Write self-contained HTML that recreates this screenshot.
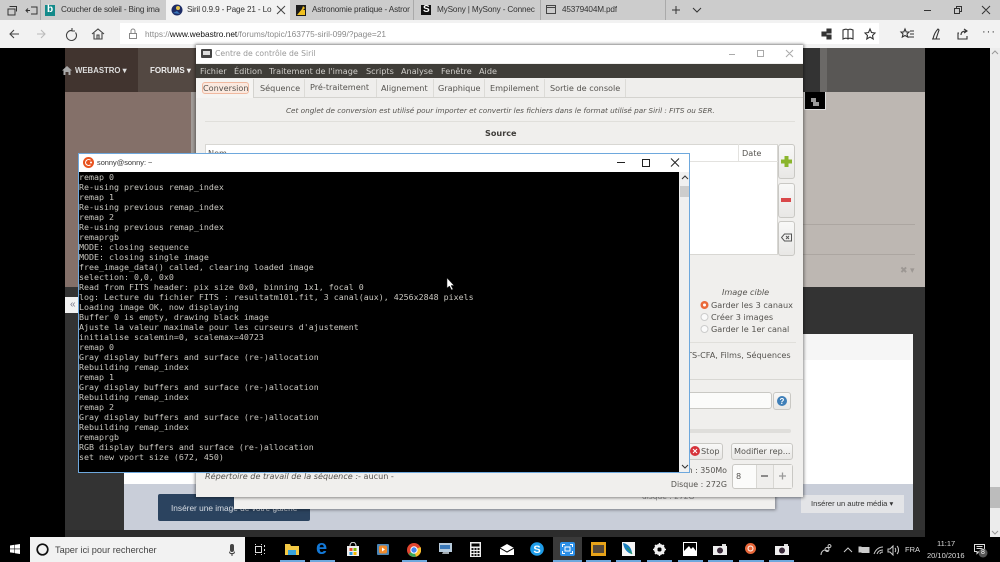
<!DOCTYPE html>
<html><head><meta charset="utf-8"><style>
html,body{margin:0;padding:0;background:#000}
#p{position:relative;width:1000px;height:562px;overflow:hidden;background:#000;font-family:"Liberation Sans",sans-serif;filter:blur(.3px)}
.b,.t,svg{position:absolute}
.t{white-space:nowrap}
.d{font-family:"DejaVu Sans",sans-serif;font-size:8.150px;color:#55534f;line-height:12px}
.tb{font-size:8.200px;letter-spacing:-.15px;color:#333;line-height:12px;overflow:hidden}
.btn{position:absolute;background:linear-gradient(#f8f8f7,#e8e7e5);border:1px solid #c9c8c4;border-radius:3px;box-sizing:border-box}
</style></head><body><div id="p">
<!-- browser chrome -->
<div class="b" style="left:0;top:0;width:1000px;height:20px;background:#ccc"></div>
<div class="b" style="left:0;top:20px;width:1000px;height:28px;background:#f2f2f2"></div>
<div class="b" style="left:166px;top:0;width:124px;height:20px;background:#f2f2f2"></div>
<div class="b" style="left:40px;top:0;width:1px;height:20px;background:#aaa"></div>
<div class="b" style="left:413px;top:0;width:1px;height:20px;background:#aaa"></div>
<div class="b" style="left:540px;top:0;width:1px;height:20px;background:#aaa"></div>
<div class="b" style="left:665px;top:0;width:1px;height:20px;background:#aaa"></div>
<svg style="left:6px;top:4px" width="34" height="13" fill="none" stroke="#333"><path d="M2.500 2.500h7v5M1 5h7v6H1z" transform="translate(1 0)"/><path d="M20 6.500h4M22 4.500l-2 2 2 2M25 3h6v7h-6"/></svg>
<div class="b" style="left:45px;top:5px;width:10px;height:11px;background:#138a8a"></div>
<div class="t" style="left:47px;top:4px;font:bold 10px 'Liberation Sans';color:#fff">b</div>
<div class="t tb" style="left:61px;top:4px;width:99px">Coucher de soleil - Bing images</div>
<svg style="left:171px;top:4px" width="12" height="12"><circle cx="6" cy="6" r="5.500" fill="#1d2c66"/><circle cx="7" cy="4" r="2" fill="#e3c24a"/><path d="M2 9l4-2 3 3" fill="#3b79bd"/></svg>
<div class="t tb" style="left:187px;top:4px;width:85px">Siril 0.9.9 - Page 21 - Lo</div>
<svg style="left:276px;top:5px" width="10" height="10" stroke="#444"><path d="M1 1l8 8M9 1l-8 8"/></svg>
<div class="b" style="left:296px;top:5px;width:10px;height:11px;background:#1b1b1b"></div>
<svg style="left:296px;top:5px" width="10" height="11"><path d="M1 10l5-6 1-3 2 2-2 2h2v5z" fill="#f0c020"/></svg>
<div class="t tb" style="left:312px;top:4px;width:98px">Astronomie pratique - Astronomie</div>
<div class="b" style="left:421px;top:5px;width:10px;height:10px;background:#111"></div>
<div class="t" style="left:423px;top:4px;font:bold 10px 'Liberation Sans';color:#fff">S</div>
<div class="t tb" style="left:437px;top:4px;width:98px">MySony | MySony - Connec</div>
<svg style="left:546px;top:5px" width="10" height="10" fill="none" stroke="#444"><path d="M.5.500h9v8h-9zM.5 2.500h9"/></svg>
<div class="t tb" style="left:562px;top:4px">45379404M.pdf</div>
<svg style="left:671px;top:5px" width="32" height="10" fill="none" stroke="#333"><path d="M5 1v8M1 5h8M22 3l4 4 4-4"/></svg>
<svg style="left:923px;top:5px" width="70" height="10" fill="none" stroke="#333"><path d="M1 5.500h7M31.500 3.500h5v5h-5zM33.500 3.500v-2h5v5h-2M59 1l8 8M67 1l-8 8"/></svg>
<svg style="left:8px;top:26px" width="100" height="16" fill="none" stroke="#444" stroke-width="1.100"><path d="M2 8h9M6 4L2 8l4 4"/><path d="M29 8h8M33 4l4 4-4 4" stroke="#bbb"/><path d="M64 4.500a5 5 0 1 0 3.500 2M64 2v3h3"/><path d="M90 8l6-5 6 5M92 7v6h8V7M95 13V9h2v4" transform="translate(-6 0)"/></svg>
<div class="b" style="left:120px;top:23px;width:759px;height:21px;background:#fff"></div>
<svg style="left:128px;top:28px" width="10" height="11" fill="none" stroke="#888"><path d="M1.500 5.500h7v5h-7zM3 5V3a2 2 0 0 1 4 0v2"/></svg>
<div class="t" style="left:145px;top:28px;font-size:8.300px;line-height:12px;color:#8a8a8a">https://<span style="color:#111">www.webastro.net</span>/forums/topic/163775-siril-099/?page=21</div>
<svg style="left:820px;top:27px" width="180" height="14" fill="none" stroke="#333" stroke-width="1.100"><path d="M2 5h4v4H2zM7 2h4v4H7zM7 8h4v4H7z" fill="#333"/><path d="M23 3c2-1 4-1 5 0 1-1 3-1 5 0v9c-2-1-4-1-5 0-1-1-3-1-5 0zM28 3v9" /><path d="M50 2l1.500 3.500L55 6l-2.500 2.500.7 3.500-3.200-2-3.200 2 .7-3.500L45 6l3.500-.500z"/><path d="M85 2l1.200 3H89l-2 2 .7 3-2.700-1.500L82.300 10l.7-3-2-2h2.800zM90 4h4M90 7h4M88 10h6"/><path d="M113 12c1-5 3-8 5-10l1 1-3 9zM112 12h8"/><path d="M139 6h-1v6h9V9M141 8c0-3 2-4 5-4M144 2l3 2-3 2"/></svg>
<div class="t" style="left:982px;top:26px;font-size:11px;letter-spacing:1px;color:#333">···</div>
<!-- page -->
<div class="b" style="left:65px;top:48px;width:925px;height:482px;background:#333"></div>
<div class="b" style="left:0;top:48px;width:65px;height:489px;background:#000"></div>
<div class="b" style="left:925px;top:48px;width:65px;height:489px;background:#000"></div>
<div class="b" style="left:65px;top:530px;width:860px;height:7px;background:#2c2c2c"></div>
<div class="b" style="left:990px;top:48px;width:10px;height:489px;background:#ececec"></div>
<div class="b" style="left:990px;top:487px;width:10px;height:21px;background:#bcbcbc"></div>
<svg style="left:991px;top:50px" width="8" height="6" fill="none" stroke="#999"><path d="M1 4l3-3 3 3"/></svg>
<svg style="left:991px;top:530px" width="8" height="6" fill="none" stroke="#999"><path d="M1 1l3 3 3-3"/></svg>
<div class="b" style="left:65px;top:48px;width:73px;height:44px;background:#41342f"></div>
<div class="b" style="left:138px;top:48px;width:58px;height:44px;background:#534842"></div>
<div class="b" style="left:820px;top:48px;width:7px;height:44px;background:#6b6967"></div>
<div class="b" style="left:827px;top:48px;width:98px;height:44px;background:#595755"></div>
<div class="b" style="left:65px;top:92px;width:126px;height:195px;background:#847069"></div>
<div class="b" style="left:191px;top:92px;width:5px;height:195px;background:#a39d99"></div>
<div class="b" style="left:803px;top:92px;width:122px;height:195px;background:#bdb7b2"></div>
<div class="b" style="left:803px;top:224px;width:112px;height:1px;background:#aca6a1"></div>
<div class="b" style="left:803px;top:254px;width:112px;height:1px;background:#aca6a1"></div>
<div class="b" style="left:804px;top:92px;width:22px;height:18px;background:#000;border:1px solid #ddd;border-top:0;box-sizing:border-box"></div>
<svg style="left:810px;top:97px" width="11" height="10"><path d="M1 1h5v4h3v4H3V5H1z" fill="#999"/></svg>
<div class="t" style="left:900px;top:264px;font-size:9px;line-height:12px;color:#9c9793">✖ ▾</div>
<svg style="left:62px;top:66px" width="10" height="9"><path d="M5 0l5 4.500H8.500V9h-2V6h-3v3h-2V4.500H0z" fill="#aaa"/></svg>
<div class="t" style="left:75px;top:65px;font-size:7.800px;font-weight:bold;line-height:11px;color:#ddd">WEBASTRO ▾</div>
<div class="t" style="left:150px;top:65px;font-size:8px;font-weight:bold;line-height:11px;color:#eee">FORUMS ▾</div>
<div class="b" style="left:65px;top:297px;width:13px;height:16px;background:#f2f2f2"></div>
<div class="t" style="left:70px;top:299px;font-size:10px;line-height:12px;color:#778">«</div>
<div class="b" style="left:124px;top:334px;width:789px;height:150px;background:#fff"></div>
<div class="b" style="left:124px;top:334px;width:789px;height:26px;background:#f6f6f6"></div>
<div class="b" style="left:124px;top:484px;width:789px;height:46px;background:#c9ced9"></div>
<div class="b" style="left:158px;top:494px;width:152px;height:27px;background:#2b435f;border-radius:2px"></div>
<div class="t" style="left:171px;top:502px;font-size:8.300px;line-height:12px;color:#d8dde4">Insérer une image de votre galerie</div>
<div class="t" style="left:331px;top:502px;font-size:10px;line-height:12px;color:#111">ˇ</div>
<div class="b" style="left:801px;top:495px;width:103px;height:18px;background:#e3e4e7"></div>
<div class="t" style="left:811px;top:498px;font-size:7.600px;line-height:12px;color:#333">Insérer un autre média ▾</div>
<!-- second window -->
<div class="b" style="left:234px;top:480px;width:541px;height:29px;background:#f1f0ee;box-shadow:1px 1px 3px rgba(0,0,0,.4)"></div>
<div class="t d" style="left:642px;top:491px;font-size:7.500px;color:#888">disque : 272G</div>
<div class="b" style="left:696px;top:490px;width:69px;height:7px;border:1px solid #ccc;box-sizing:border-box"></div>
<!-- siril -->
<div class="b" style="left:196px;top:45px;width:607px;height:452px;background:#f0efed;box-shadow:0 0 3px 1px rgba(0,0,0,.45)"></div>
<div class="b" style="left:196px;top:45px;width:607px;height:18px;background:#fff"></div>
<svg style="left:201px;top:49px" width="12" height="10"><rect x="0" y="0" width="11" height="9" rx="1" fill="#444"/><rect x="2" y="2" width="7" height="4" fill="#ddd"/></svg>
<div class="t" style="left:215px;top:48px;font-size:7.700px;line-height:12px;color:#999;font-family:'DejaVu Sans'">Centre de contrôle de Siril</div>
<svg style="left:728px;top:48px" width="70" height="12" fill="none" stroke="#aaa"><path d="M1 6.500h6M29.500 2.500h6v6h-6zM58 2l7 7M65 2l-7 7"/></svg>
<div class="b" style="left:196px;top:64px;width:607px;height:14px;background:#3f3d38"></div>
<div class="t d" style="left:200px;top:65px;color:#cfcdc9">Fichier</div>
<div class="t d" style="left:234px;top:65px;color:#cfcdc9">Édition</div>
<div class="t d" style="left:269px;top:65px;color:#cfcdc9">Traitement de l'image</div>
<div class="t d" style="left:366px;top:65px;color:#cfcdc9">Scripts</div>
<div class="t d" style="left:401px;top:65px;color:#cfcdc9">Analyse</div>
<div class="t d" style="left:441px;top:65px;color:#cfcdc9">Fenêtre</div>
<div class="t d" style="left:479px;top:65px;color:#cfcdc9">Aide</div>
<div class="b" style="left:196px;top:79px;width:607px;height:19px;background:#efeeec;border-bottom:1px solid #d4d3cf;box-sizing:border-box"></div>
<div class="b" style="left:196px;top:79px;width:58px;height:19px;background:#f5f4f2;border-right:1px solid #d4d3cf;box-sizing:border-box"></div>
<div class="b" style="left:202px;top:82px;width:47px;height:12px;background:#fbe9df;border:1px solid #f0b9a0;border-radius:3px;box-sizing:border-box"></div>
<div class="t d" style="left:203px;top:82px">Conversion</div>
<div class="t d" style="left:260px;top:82px">Séquence</div>
<div class="t d" style="left:310px;top:81px">Pré-traitement</div>
<div class="t d" style="left:381px;top:82px">Alignement</div>
<div class="t d" style="left:438px;top:82px">Graphique</div>
<div class="t d" style="left:490px;top:82px">Empilement</div>
<div class="t d" style="left:550px;top:82px">Sortie de console</div>
<div class="b" style="left:304px;top:79px;width:1px;height:18px;background:#dcdbd7"></div>
<div class="b" style="left:376px;top:79px;width:1px;height:18px;background:#dcdbd7"></div>
<div class="b" style="left:433px;top:79px;width:1px;height:18px;background:#dcdbd7"></div>
<div class="b" style="left:484px;top:79px;width:1px;height:18px;background:#dcdbd7"></div>
<div class="b" style="left:544px;top:79px;width:1px;height:18px;background:#dcdbd7"></div>
<div class="b" style="left:625px;top:79px;width:1px;height:18px;background:#dcdbd7"></div>
<div class="t d" style="left:286px;top:105px;font-style:italic;font-size:7.250px">Cet onglet de conversion est utilisé pour importer et convertir les fichiers dans le format utilisé par Siril : FITS ou SER.</div>
<div class="b" style="left:205px;top:121px;width:590px;height:1px;background:#e0dfdb"></div>
<div class="t d" style="left:485px;top:127px;font-weight:bold;color:#3f3d3a">Source</div>
<div class="b" style="left:205px;top:144px;width:573px;height:111px;background:#fff;border:1px solid #d8d7d3;box-sizing:border-box"></div>
<div class="b" style="left:205px;top:161px;width:573px;height:1px;background:#e3e2df"></div>
<div class="b" style="left:738px;top:144px;width:1px;height:17px;background:#e3e2df"></div>
<div class="t d" style="left:208px;top:147px">Nom</div>
<div class="t d" style="left:742px;top:147px">Date</div>
<div class="btn" style="left:778px;top:144px;width:17px;height:35px"></div>
<div class="btn" style="left:778px;top:183px;width:17px;height:35px"></div>
<div class="btn" style="left:778px;top:221px;width:17px;height:35px"></div>
<svg style="left:781px;top:156px" width="11" height="11"><path d="M3.500 0h4v3.500H11v4H7.500V11h-4V7.500H0v-4h3.500z" fill="#8ab52c"/></svg>
<div class="b" style="left:781px;top:198px;width:10px;height:4px;background:#d9484a"></div>
<svg style="left:781px;top:233px" width="11" height="9" fill="none" stroke="#555"><path d="M3.500 1h7v7h-7L.5 4.500zM5 3l3 3M8 3L5 6"/></svg>
<div class="t d" style="left:722px;top:286px;font-style:italic">Image cible</div>
<svg style="left:700px;top:300px" width="10" height="36"><circle cx="4.500" cy="5" r="4" fill="#ea6a3a"/><circle cx="4.500" cy="5" r="1.500" fill="#fff"/><circle cx="4.500" cy="17" r="3.500" fill="#fafafa" stroke="#ccc"/><circle cx="4.500" cy="29" r="3.500" fill="#fafafa" stroke="#ccc"/></svg>
<div class="t d" style="left:711px;top:299px">Garder les 3 canaux</div>
<div class="t d" style="left:711px;top:311px">Créer 3 images</div>
<div class="t d" style="left:711px;top:323px">Garder le 1er canal</div>
<div class="b" style="left:690px;top:342px;width:106px;height:1px;background:#e0dfdb"></div>
<div class="t d" style="left:680px;top:349px">FITS-CFA, Films, Séquences</div>
<div class="b" style="left:196px;top:379px;width:607px;height:1px;background:#d8d7d3"></div>
<div class="b" style="left:680px;top:392px;width:92px;height:17px;background:#fbfbfa;border:1px solid #c9c8c4;border-radius:3px;box-sizing:border-box"></div>
<div class="btn" style="left:773px;top:392px;width:18px;height:18px"></div>
<svg style="left:776px;top:395px" width="12" height="12"><circle cx="6" cy="6" r="5" fill="#3f7fb8"/><text x="6" y="9" font-size="8" font-weight="bold" text-anchor="middle" fill="#fff" font-family="Liberation Sans">?</text></svg>
<div class="b" style="left:680px;top:429px;width:111px;height:4px;background:#dfdedb;border-radius:2px"></div>
<div class="btn" style="left:680px;top:443px;width:43px;height:17px"></div>
<svg style="left:690px;top:446px" width="10" height="10"><circle cx="5" cy="5" r="5" fill="#d6333a"/><path d="M3 3l4 4M7 3L3 7" stroke="#fff"/></svg>
<div class="t d" style="left:701px;top:445px">Stop</div>
<div class="btn" style="left:731px;top:443px;width:62px;height:17px"></div>
<div class="t d" style="left:734px;top:445px">Modifier rep...</div>
<div class="t d" style="left:667px;top:465px;width:60px;text-align:right;font-size:7.900px">Mém : 350Mo</div>
<div class="t d" style="left:667px;top:479px;width:60px;text-align:right;font-size:7.900px">Disque : 272G</div>
<div class="b" style="left:732px;top:464px;width:61px;height:25px;background:#fbfbfa;border:1px solid #c9c8c4;border-radius:3px;box-sizing:border-box"></div>
<div class="b" style="left:756px;top:465px;width:18px;height:23px;background:#efeeec;border-left:1px solid #d8d7d3;border-right:1px solid #d8d7d3;box-sizing:border-box"></div>
<div class="b" style="left:774px;top:465px;width:18px;height:23px;background:#f3f2f0"></div>
<div class="t d" style="left:736px;top:470px">8</div>
<svg style="left:760px;top:471px" width="30" height="10" stroke-width="1.300"><path d="M1 5h7" stroke="#555"/><path d="M19 5h7M22.500 1.500v7" stroke="#999"/></svg>
<div class="t d" style="left:205px;top:470px;font-style:italic;font-size:8.100px">Répertoire de travail de la séquence :<span style="font-style:normal">- aucun -</span></div>
<!-- terminal -->
<div class="b" style="left:78px;top:153px;width:612px;height:320px;background:#f0f0f0;border:1px solid #6ea8dd;box-sizing:border-box"></div>
<div class="b" style="left:79px;top:154px;width:610px;height:18px;background:#fff"></div>
<div class="b" style="left:79px;top:172px;width:600px;height:300px;background:#000"></div>
<div class="b" style="left:680px;top:186px;width:9px;height:11px;background:#cdcdcd"></div>
<svg style="left:681px;top:175px" width="8" height="6" fill="none" stroke="#333"><path d="M1 4l3-3 3 3"/></svg>
<svg style="left:681px;top:464px" width="8" height="6" fill="none" stroke="#333"><path d="M1 1l3 3 3-3"/></svg>
<svg style="left:83px;top:157px" width="11" height="11"><circle cx="5.500" cy="5.500" r="5.500" fill="#e8531f"/><path d="M7.500 3.200a3 3 0 1 0 0 4.600" fill="none" stroke="#fff" stroke-width="1.100"/><circle cx="8" cy="5.500" r="1" fill="#fff"/></svg>
<div class="t" style="left:97px;top:157px;font-size:7.400px;line-height:12px;color:#333">sonny@sonny: ~</div>
<svg style="left:616px;top:157px" width="65" height="11" fill="none" stroke="#222"><path d="M1 5.500h8M26.500 2.500h7v7h-7zM55 1.500l8 8M63 1.500l-8 8"/></svg>
<pre class="b" style="left:79px;top:172px;margin:0;white-space:pre;font-family:'DejaVu Sans Mono',monospace;font-size:8.300px;line-height:10px;color:#c9c7c0">remap 0
Re-using previous remap_index
remap 1
Re-using previous remap_index
remap 2
Re-using previous remap_index
remaprgb
MODE: closing sequence
MODE: closing single image
free_image_data() called, clearing loaded image
selection: 0,0, 0x0
Read from FITS header: pix size 0x0, binning 1x1, focal 0
log: Lecture du fichier FITS : resultatm101.fit, 3 canal(aux), 4256x2848 pixels
Loading image OK, now displaying
Buffer 0 is empty, drawing black image
Ajuste la valeur maximale pour les curseurs d'ajustement
initialise scalemin=0, scalemax=40723
remap 0
Gray display buffers and surface (re-)allocation
Rebuilding remap_index
remap 1
Gray display buffers and surface (re-)allocation
Rebuilding remap_index
remap 2
Gray display buffers and surface (re-)allocation
Rebuilding remap_index
remaprgb
RGB display buffers and surface (re-)allocation
set new vport size (672, 450)</pre>
<svg style="left:446px;top:277px" width="10" height="14"><path d="M1 1v10l2.500-2 2 4 1.500-.8-2-3.700h3z" fill="#fff" stroke="#222" stroke-width=".5"/></svg>
<!-- taskbar -->
<div class="b" style="left:0;top:537px;width:1000px;height:25px;background:#000"></div>
<div class="b" style="left:30px;top:537px;width:215px;height:25px;background:#f2f2f2"></div>
<svg style="left:10px;top:544px" width="10" height="10" fill="#fff"><path d="M0 1.500l4.500-.7v3.800H0zM5 .7L10 0v4.600H5zM0 5.200h4.500V9L0 8.400zM5 5.200h5V10l-5-.7z"/></svg>
<svg style="left:36px;top:543px" width="14" height="14" fill="none" stroke="#111" stroke-width="1.700"><circle cx="6.500" cy="6.500" r="5.300"/></svg>
<div class="t" style="left:55px;top:544px;font-size:9.200px;line-height:12px;color:#444">Taper ici pour rechercher</div>
<svg style="left:228px;top:544px" width="8" height="12" fill="#444"><rect x="2" y="0" width="4" height="8" rx="2"/><path d="M1 6c0 4 6 4 6 0v2c0 3-6 3-6 0zM3.500 10h1v2h-1z"/></svg>
<svg style="left:255px;top:544px" width="11" height="11" fill="none" stroke="#ddd"><path d="M.5 2.500h6v6h-6zM9.500 1v2M9.500 5v2M9.500 9v1M.5 0v1M6.500 0v1M.5 10v1M6.500 10v1"/></svg>
<svg style="left:285px;top:543px" width="14" height="12"><path d="M0 1h5l1 2h8v9H0z" fill="#f3c945"/><rect x="3" y="7" width="8" height="5" fill="#38a3dd"/></svg>
<div class="t" style="left:316px;top:536px;font:bold 20px 'Liberation Sans';line-height:24px;color:#1378d6">e</div>
<svg style="left:346px;top:542px" width="14" height="14"><path d="M1 4h12v10H1z" fill="#eee"/><path d="M4 4c0-5 6-5 6 0" fill="none" stroke="#ddd"/><rect x="3.500" y="6" width="3" height="3" fill="#e8482c"/><rect x="7.500" y="6" width="3" height="3" fill="#7fba00"/><rect x="3.500" y="10" width="3" height="3" fill="#2a9be0"/><rect x="7.500" y="10" width="3" height="3" fill="#f5b800"/></svg>
<svg style="left:377px;top:544px" width="12" height="11"><rect width="12" height="11" rx="1" fill="#4a86b8"/><rect x="2" y="1.500" width="8" height="8" rx="2" fill="#f08a2c"/><path d="M5 3.500l3 2-3 2z" fill="#fff"/></svg>
<svg style="left:407px;top:543px" width="14" height="14"><circle cx="7" cy="7" r="7" fill="#e0452f"/><path d="M7 7L1.500 11a7 7 0 0 0 7.500 2.700z" fill="#3aa757"/><path d="M7 7l2 6.700A7 7 0 0 0 13.500 4z" fill="#fbc02d"/><circle cx="7" cy="7" r="3.200" fill="#4285f4" stroke="#fff"/></svg>
<svg style="left:438px;top:542px" width="15" height="14"><path d="M1 1h13v9H1z" fill="#b7cbdc"/><rect x="2" y="3" width="10" height="4" fill="#3a78b8"/><path d="M5 10h6v2H4z" fill="#9fa6ac"/></svg>
<svg style="left:470px;top:542px" width="11" height="15"><rect width="11" height="15" fill="#eee"/><rect x="1.500" y="1.500" width="8" height="3" fill="#000"/><path d="M1.500 6h2v2h-2zM4.500 6h2v2h-2zM7.500 6h2v2h-2zM1.500 9h2v2h-2zM4.500 9h2v2h-2zM7.500 9h2v2h-2zM1.500 12h2v2h-2zM4.500 12h2v2h-2zM7.500 12h2v2h-2z" fill="#111"/></svg>
<svg style="left:500px;top:544px" width="14" height="11"><path d="M0 4l7-4 7 4v7H0z" fill="#fff"/><path d="M0 4l7 4 7-4" fill="none" stroke="#000"/></svg>
<svg style="left:530px;top:542px" width="14" height="14"><circle cx="7" cy="7" r="6.800" fill="#1e9ce8"/><text x="7" y="11" font-size="11" font-weight="bold" text-anchor="middle" fill="#fff" font-family="Liberation Sans">S</text></svg>
<div class="b" style="left:553px;top:537px;width:29px;height:25px;background:#3a3a3a"></div>
<div class="b" style="left:560px;top:542px;width:15px;height:14px;background:#2b8fe8;border-radius:2px"></div>
<svg style="left:562px;top:544px" width="11" height="10" fill="none" stroke="#fff"><path d="M.5 3V.5H3M8 .5h2.500V3M10.500 7v2.500H8M3 9.500H.5V7M3 3h5v4H3z"/></svg>
<div class="b" style="left:591px;top:542px;width:15px;height:14px;background:#e8a319"></div>
<div class="b" style="left:593px;top:545px;width:11px;height:8px;background:#55483a"></div>
<svg style="left:621px;top:542px" width="14" height="14"><path d="M1 0h13v14H1z" fill="#f4f4f4"/><path d="M2 1c6 1 9 6 9 11C6 11 3 7 2 1z" fill="#1a7fbf"/><path d="M6 6c2 2 4 4 5 6" stroke="#2b9a55" fill="none"/></svg>
<svg style="left:653px;top:543px" width="13" height="13"><circle cx="6.500" cy="6.500" r="4" fill="none" stroke="#eee" stroke-width="3"/><path d="M6.500 0v13M0 6.500h13M2 2l9 9M11 2l-9 9" stroke="#eee" stroke-width="1.500"/><circle cx="6.500" cy="6.500" r="2" fill="#000"/></svg>
<svg style="left:683px;top:542px" width="14" height="14"><path d="M0 0h14v14H0z" fill="#fff"/><path d="M1 1h12v8l-3-4-2 2-2-3-5 5z" fill="#000"/></svg>
<svg style="left:713px;top:544px" width="14" height="11"><rect y="2" width="14" height="9" fill="#eee"/><circle cx="7" cy="6.500" r="3" fill="#3a2a3a"/><path d="M9 0h4v2H9z" fill="#ddd"/></svg>
<svg style="left:745px;top:543px" width="11" height="11"><circle cx="5.500" cy="5.500" r="5.500" fill="#e8673a"/><circle cx="5.500" cy="5.500" r="2.500" fill="none" stroke="#fff"/></svg>
<svg style="left:775px;top:544px" width="14" height="11"><rect y="2" width="14" height="9" fill="#eee"/><circle cx="7" cy="6.500" r="3" fill="#3a2a3a"/><path d="M9 0h4v2H9z" fill="#ddd"/></svg>
<div class="b" style="left:280px;top:560px;width:25px;height:2px;background:#6ea8dd"></div>
<div class="b" style="left:310px;top:560px;width:25px;height:2px;background:#6ea8dd"></div>
<div class="b" style="left:402px;top:560px;width:25px;height:2px;background:#6ea8dd"></div>
<div class="b" style="left:553px;top:560px;width:29px;height:2px;background:#6ea8dd"></div>
<div class="b" style="left:586px;top:560px;width:25px;height:2px;background:#6ea8dd"></div>
<div class="b" style="left:616px;top:560px;width:25px;height:2px;background:#6ea8dd"></div>
<div class="b" style="left:647px;top:560px;width:25px;height:2px;background:#6ea8dd"></div>
<div class="b" style="left:678px;top:560px;width:25px;height:2px;background:#6ea8dd"></div>
<div class="b" style="left:708px;top:560px;width:25px;height:2px;background:#6ea8dd"></div>
<div class="b" style="left:739px;top:560px;width:25px;height:2px;background:#6ea8dd"></div>
<div class="b" style="left:769px;top:560px;width:25px;height:2px;background:#6ea8dd"></div>
<svg style="left:820px;top:544px" width="80" height="12" fill="none" stroke="#ccc"><path d="M1 11c0-3 2-5 4-5s3 1 3 2M5 5.500a2 2 0 1 0 0-.1M8 2a1.500 1.500 0 1 1 0 .1"/><path d="M24 8l4-4 4 4"/><path d="M39 3h2v5h-2zM42 3.500h7v5h-7z" fill="#ccc"/><path d="M54 10c2-5 5-7 9-7M57 10c1-3 3-4 6-4M60 10c0-1 1-2 3-2"/><path d="M68 5h2l3-3v9l-3-3h-2zM75 4c1 1 1 3 0 4M77 2c2 2 2 6 0 8"/></svg>
<div class="t" style="left:905px;top:544px;font-size:7.500px;line-height:12px;color:#ddd">FRA</div>
<div class="t" style="left:937px;top:538px;font-size:7.500px;line-height:11px;color:#ddd">11:17</div>
<div class="t" style="left:927px;top:550px;font-size:7.500px;line-height:11px;color:#ddd">20/10/2016</div>
<svg style="left:974px;top:544px" width="14" height="14"><path d="M.5.500h10v7H5l-2 2v-2H.5z" fill="none" stroke="#ddd"/><path d="M2.500 2.500h6M2.500 4.500h6" stroke="#ddd"/><circle cx="9" cy="9" r="4.500" fill="#555"/></svg>
<div class="t" style="left:981px;top:548px;font-size:7px;line-height:10px;color:#fff">8</div>
</div></body></html>
